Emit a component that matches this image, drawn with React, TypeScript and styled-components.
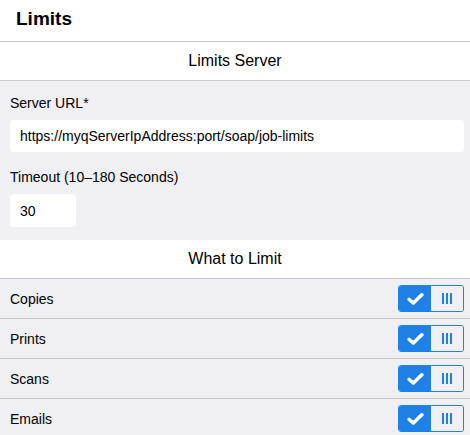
import React from "react";
import styled, { createGlobalStyle } from "styled-components";

const GlobalStyle = createGlobalStyle`
  body {
    margin: 0;
    background: #ffffff;
    font-family: "Liberation Sans", Arial, sans-serif;
    color: #000;
  }
`;

const Page = styled.div`
  display: flex;
  flex-direction: column;
  width: 470px;
`;

const TopBar = styled.header`
  box-sizing: border-box;
  height: 42px;
  display: flex;
  align-items: center;
  padding: 0 0 4px 16px;
  border-bottom: 1px solid #c8c7cc;
`;

const Title = styled.h1`
  margin: 0;
  font-size: 19px;
  font-weight: bold;
`;

const SectionHeader = styled.div<{ $h: number }>`
  height: ${(p) => p.$h}px;
  display: flex;
  align-items: center;
  justify-content: center;
  font-size: 16px;
  background: #fff;
  border-bottom: 1px solid #c8c7cc;
`;

const FormArea = styled.div`
  background: #efeff4;
  padding: 12px 6px 13px 10px;
  display: flex;
  flex-direction: column;
`;

const Label = styled.label<{ $gap?: number }>`
  font-size: 14px;
  line-height: 20px;
  margin-top: ${(p) => p.$gap ?? 0}px;
  margin-bottom: 7px;
`;

const Field = styled.input<{ $w?: number; $h: number }>`
  box-sizing: border-box;
  width: ${(p) => (p.$w ? `${p.$w}px` : "100%")};
  height: ${(p) => p.$h}px;
  border: none;
  border-radius: 4px;
  background: #fff;
  padding: 0 10px;
  font-family: inherit;
  font-size: 14px;
  color: #000;
  outline: none;
`;

const Row = styled.div`
  height: 39px;
  display: flex;
  align-items: center;
  justify-content: space-between;
  padding: 0 6px 0 10px;
  background: #efeff4;
  border-bottom: 1px solid #c8c7cc;
  font-size: 14px;
`;

const Toggle = styled.div`
  box-sizing: border-box;
  width: 66px;
  height: 27px;
  display: flex;
  border: 1.5px solid #1f80e7;
  border-radius: 3px;
  overflow: hidden;
`;

const ToggleOn = styled.div`
  width: 32px;
  background: #1f80e7;
  display: flex;
  align-items: center;
  justify-content: center;
`;

const ToggleOff = styled.div`
  flex: 1;
  background: #efeff4;
  display: flex;
  align-items: center;
  justify-content: center;
  gap: 2.5px;
`;

const Bar = styled.span`
  width: 1.5px;
  height: 11px;
  background: #1f80e7;
`;

const Check = () => (
  <svg width="17" height="14" viewBox="0 0 17 14">
    <path
      d="M2.2 7.5 L6.3 11 L14.8 2.8"
      fill="none"
      stroke="#fff"
      strokeWidth="3.6"
      strokeLinecap="round"
      strokeLinejoin="round"
    />
  </svg>
);

const Switch = () => (
  <Toggle>
    <ToggleOn>
      <Check />
    </ToggleOn>
    <ToggleOff>
      <Bar />
      <Bar />
      <Bar />
    </ToggleOff>
  </Toggle>
);

const limits = ["Copies", "Prints", "Scans", "Emails"];

export default function App() {
  return (
    <Page>
      <GlobalStyle />
      <TopBar>
        <Title>Limits</Title>
      </TopBar>
      <SectionHeader $h={38}>Limits Server</SectionHeader>
      <FormArea>
        <Label>Server URL*</Label>
        <Field
          $h={32}
          defaultValue="https://myqServerIpAddress:port/soap/job-limits"
        />
        <Label $gap={15}>Timeout (10–180 Seconds)</Label>
        <Field $w={66} $h={33} defaultValue="30" />
      </FormArea>
      <SectionHeader $h={38}>What to Limit</SectionHeader>
      {limits.map((name) => (
        <Row key={name}>
          <span>{name}</span>
          <Switch />
        </Row>
      ))}
    </Page>
  );
}
